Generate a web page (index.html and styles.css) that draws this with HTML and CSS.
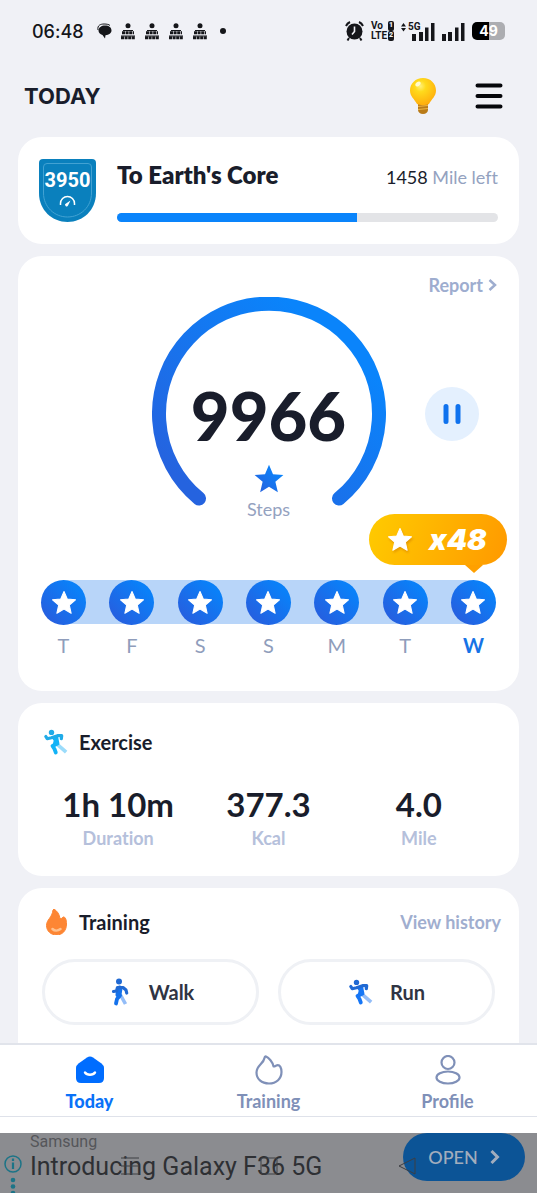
FILE: index.html
```html
<!DOCTYPE html>
<html lang="en">
<head>
    <meta charset="UTF-8">
    <meta name="viewport" content="width=device-width, initial-scale=1.0">
    <title>Today</title>
    <link rel="stylesheet" href="styles.css">
</head>
<body>
    <svg class="sprite" aria-hidden="true">
        <defs>
            <linearGradient id="blue" x1="0" y1="1" x2="1" y2="0">
                <stop offset="0.1" stop-color="#2563df"/>
                <stop offset="0.8" stop-color="#0a84fb"/>
            </linearGradient>
        </defs>
        <symbol id="star" viewBox="0 0 24 24">
            <path d="M12 1.400l3 6.900 7.600.7-5.700 5 1.700 7.500-6.600-3.900-6.600 3.900 1.700-7.500-5.700-5 7.600-.7z" stroke-width="1" stroke-linejoin="round" stroke="currentColor" fill="currentColor"/>
        </symbol>
        <symbol id="runner" viewBox="0 0 26 26">
            <path d="M14.500 15.500l7.300 6.500" fill="none" stroke="var(--leg)" stroke-width="3.600" stroke-linecap="square"/>
            <circle cx="8.500" cy="3.400" r="2.700" fill="var(--dark)"/>
            <path d="M9.500 8.500h5l1 5.500-3 2.500-2-1 1-4z" fill="currentColor" stroke="currentColor" stroke-width="1.500" stroke-linejoin="round"/>
            <path d="M14.500 14.500L9.500 17l2 3 1.300 3.500" fill="none" stroke="currentColor" stroke-width="3.800" stroke-linecap="round" stroke-linejoin="round"/>
            <path d="M2.800 7.500l1.400 2.200 4.300-1 6-2h4.200l-.4 3" fill="none" stroke="var(--dark)" stroke-width="3.200" stroke-linecap="round" stroke-linejoin="round"/>
        </symbol>
        <symbol id="paper" viewBox="0 0 16 17">
            <circle cx="8" cy="2.800" r="2.500"/>
            <path d="M3 7.500h10M1 13h14" fill="none" stroke="currentColor" stroke-width="1.200"/>
            <path d="M2 9.800h12M1 14.800h14" fill="none" stroke="currentColor" stroke-width="3" stroke-dasharray="3 0.600"/>
        </symbol>
    </svg>

    <div class="status">
        <span class="clock">06:48</span>
        <div class="notices">
            <svg width="15" height="16" viewBox="0 0 15 16"><path d="M1 7C0 2 4 1 7 1c3 0 5 .5 6 1.500" fill="none" stroke="currentColor"/><path d="M8 2.500c4 0 6.500 2 6.500 5 0 2.500-2.500 4.500-6 4.700L8 15.500l-2.500-3.500C3 11.500 1.500 9.500 1.500 7.500c0-3 3-5 6.500-5z"/></svg>
            <svg width="16" height="17"><use href="#paper"/></svg>
            <svg width="16" height="17"><use href="#paper"/></svg>
            <svg width="16" height="17"><use href="#paper"/></svg>
            <svg width="16" height="17"><use href="#paper"/></svg>
            <span class="dot"></span>
        </div>
        <div class="system">
            <svg width="19" height="20" viewBox="0 0 19 20"><circle cx="9.500" cy="10.500" r="8"/><path d="M1 5a8 8 0 0 1 4-4M18 5a8 8 0 0 0-4-4M4 17l-1.500 2.500M15 17l1.500 2.500" fill="none" stroke="currentColor" stroke-width="2"/><path d="M9.500 5.500v5l-2.500 3" fill="none" stroke="#f0f1f6" stroke-width="1.600"/></svg>
            <div class="volte">
                <span>Vo <b>1</b></span>
                <span>LTE<b>2</b></span>
            </div>
            <div class="signal">
                <svg width="34" height="19" viewBox="0 0 34 19"><path d="M0 4.500L2.500 1 5 4.500zM0 6h5L2.500 9.500zM11 12h4v7h-4zM18 10h4v9h-4zM24 5.500h3.500V19H24zM30 1h3.500v18H30z"/></svg>
                <span class="net">5G</span>
            </div>
            <svg width="23" height="19" viewBox="0 0 23 19"><path d="M0 12h4v7H0zM6 10h4v9H6zM13 5.500h3.500V19H13zM19 1h3.500v18H19z"/></svg>
            <span class="battery">49</span>
        </div>
    </div>

    <header class="header">
        <h1>TODAY</h1>
        <button class="icon-button" aria-label="Tips">
            <svg width="28" height="38" viewBox="0 0 28 38">
                <defs>
                    <radialGradient id="glass" cx="0.4" cy="0.3" r="0.7">
                        <stop offset="0" stop-color="#fff07a"/>
                        <stop offset="0.3" stop-color="#ffda1c"/>
                        <stop offset="1" stop-color="#ffae0c"/>
                    </radialGradient>
                </defs>
                <path d="M9 26h10v7c0 2-2 4-5 4s-5-2-5-4z" fill="#b97b18"/>
                <path d="M9 29.500l10-1M9 32.500l10-1" stroke="#f0b640" stroke-width="1.200"/>
                <path d="M14 1C6.500 1 1 6.500 1 13.500c0 6 4.500 8.500 7 13.500 3 1.500 9 1.500 12 0 2.500-5 7-7.500 7-13.500C27 6.500 21.500 1 14 1z" fill="url(#glass)"/>
                <ellipse cx="9" cy="7" rx="3" ry="2" fill="#fffbd0" transform="rotate(-35 9 7)"/>
            </svg>
        </button>
        <button class="icon-button" aria-label="Menu">
            <svg width="28" height="26" viewBox="0 0 28 26"><path d="M2.500 2.500h23M2.500 13h23M2.500 23.500h23" stroke="#06070b" stroke-width="4" stroke-linecap="round"/></svg>
        </button>
    </header>

    <main class="cards">
        <section class="card goal">
            <div class="shield">
                <svg width="57" height="63" viewBox="0 0 57 63">
                    <path d="M4 0h49q4 0 4 4v30c0 17-13 29-28.500 29S0 51 0 34V4q0-4 4-4z" fill="#0a80bd"/>
                    <path d="M8 4.500h41q3.500 0 3.500 3.500v26c0 14-11 24-24 24s-24-10-24-24V8q0-3.500 3.500-3.500z" fill="none" stroke="#42a2d3"/>
                    <path d="M21.500 46v-1.500a7 7 0 0 1 14 0V46" fill="none" stroke="#fff" stroke-width="1.500"/>
                    <path d="M31.500 41.500l-4.500 3a1.500 1.500 0 1 0 2 2z" fill="#fff"/>
                </svg>
                <span>3950</span>
            </div>
            <div class="goal-info">
                <div class="goal-head">
                    <h2 id="goal">To Earth's Core</h2>
                    <span class="left"><b>1458</b> Mile left</span>
                </div>
                <progress value="63" max="100" aria-labelledby="goal"></progress>
            </div>
        </section>

        <section class="card steps">
            <a class="report" href="#report">Report
                <svg width="9" height="12" viewBox="0 0 9 12"><path d="M1.500 1L7 6l-5.500 5" fill="none" stroke="currentColor" stroke-width="2.500"/></svg>
            </a>
            <div class="stage">
                <div class="ring">
                    <svg class="arc" viewBox="0 0 234 234"><path d="M47 201.500A110 110 0 1 1 187 201.500" fill="none" stroke="url(#blue)" stroke-width="14" stroke-linecap="round"/></svg>
                    <strong>9966</strong>
                    <svg width="32" height="30" viewBox="0 0 24 24"><path d="M12 .5l3.200 7.700 8.300.6-6.400 5.400 2 8.300-7.100-4.300-7.100 4.300 2-8.300L.5 8.800l8.300-.6z" fill="url(#blue)"/></svg>
                    <span>Steps</span>
                </div>
                <button class="pause" aria-label="Pause">
                    <svg width="18" height="20" viewBox="0 0 18 20"><path d="M3 2.500v15M15 2.500v15" stroke="#0f72ee" stroke-width="5" stroke-linecap="round"/></svg>
                </button>
            </div>
            <ul class="week">
                <li><i><svg><use href="#star"/></svg></i>T</li>
                <li><i><svg><use href="#star"/></svg></i>F</li>
                <li><i><svg><use href="#star"/></svg></i>S</li>
                <li><i><svg><use href="#star"/></svg></i>S</li>
                <li><i><svg><use href="#star"/></svg></i>M</li>
                <li><i><svg><use href="#star"/></svg></i>T</li>
                <li class="now">
                    <i><svg><use href="#star"/></svg></i>W
                    <div class="bonus"><svg><use href="#star"/></svg>x48</div>
                </li>
            </ul>
        </section>

        <section class="card exercise">
            <h3><svg class="cyan" width="26" height="26"><use href="#runner"/></svg>Exercise</h3>
            <dl class="stats">
                <div><dd>1h 10m</dd><dt>Duration</dt></div>
                <div><dd>377.3</dd><dt>Kcal</dt></div>
                <div><dd>4.0</dd><dt>Mile</dt></div>
            </dl>
        </section>

        <section class="card training">
            <div class="training-head">
                <h3>
                    <svg width="26" height="26" viewBox="0 0 26 26"><path d="M11 0c3 2 5.500 5 6 9.500 1.500.5 2-.5 3-1.500 2.500-.5 3.500 3 3.500 7 0 7-4.500 11-10 11S3.500 22 3.500 16.500C3.500 10.500 9 9 10 1z" fill="#fd8634" stroke="#fd8634" stroke-linejoin="round"/><path d="M9.500 20c2 2 5.500 2 8 0" fill="none" stroke="#ffc18e" stroke-width="2.500" stroke-linecap="round"/></svg>
                    Training
                </h3>
                <a href="#history">View history</a>
            </div>
            <div class="actions">
                <button>
                    <svg width="26" height="28" viewBox="0 0 26 28">
                        <path d="M13.500 17l5 9" fill="none" stroke="#93bdf8" stroke-width="3.600"/>
                        <circle cx="12" cy="3.500" r="3" fill="#2069d3"/>
                        <path d="M12.500 10.500l-1 6" fill="none" stroke="#1472ec" stroke-width="6" stroke-linecap="round"/>
                        <path d="M6.500 13.500l3-.5 1-3.500h5.500l3 2.500.7 3" fill="none" stroke="#2069d3" stroke-width="3.200" stroke-linecap="round" stroke-linejoin="round"/>
                        <path d="M13 17.500L10 21l-1 4.500" fill="none" stroke="#1472ec" stroke-width="3.800" stroke-linecap="round" stroke-linejoin="round"/>
                    </svg>
                    Walk
                </button>
                <button>
                    <svg width="26" height="26"><use href="#runner"/></svg>
                    Run
                </button>
            </div>
        </section>
    </main>

    <nav class="tabs">
        <a class="active" href="#today">
            <svg width="30" height="30" viewBox="0 0 30 30"><path d="M12 2.500q3-2 6 0l8.500 6Q29 10.500 29 13v10q0 5-5 5H6q-5 0-5-5V13q0-2.500 2.500-4.500z" fill="#006dff"/><path d="M10 17.500c2 3 8 3 10 0" fill="none" stroke="#fff" stroke-width="2.400" stroke-linecap="round"/></svg>
            Today
        </a>
        <a href="#training">
            <svg width="30" height="30" viewBox="0 0 30 30"><path d="M12 1.500c2.500 1 7 5.500 7.500 10 1.500 0 2-.8 3.500-1.200 3-.6 4.500 2.700 4.500 6.700 0 6.500-5 11.500-12.500 11.500S2.500 24 2.500 17.500C2.500 10.500 9.500 9 10.500 3c.2-1 .7-1.700 1.500-1.500z" fill="none" stroke="currentColor" stroke-width="2.200" stroke-linejoin="round"/></svg>
            Training
        </a>
        <a href="#profile">
            <svg width="30" height="30" viewBox="0 0 30 30"><circle cx="15" cy="7.500" r="6.500" fill="none" stroke="currentColor" stroke-width="2.200"/><ellipse cx="15" cy="22.500" rx="11.500" ry="6" fill="none" stroke="currentColor" stroke-width="2.200"/></svg>
            Profile
        </a>
    </nav>

    <aside class="ad">
        <div class="ad-body">
            <div class="ad-marks">
                <svg width="18" height="40" viewBox="0 0 18 40"><circle cx="9" cy="9" r="8" fill="none" stroke="#1c7487" stroke-width="1.500"/><path d="M9 7.500V14M9 3.500V6" stroke="#1c7487" stroke-width="2.200"/><g fill="#1c7487"><circle cx="9" cy="25" r="2.300"/><circle cx="9" cy="31.500" r="2.300"/><circle cx="9" cy="38" r="2.300"/></g></svg>
            </div>
            <div class="ad-text">
                <span>Samsung</span>
                <strong>Introducing Galaxy F36 5G</strong>
            </div>
            <button class="open">OPEN <svg width="10" height="14" viewBox="0 0 10 14"><path d="M1.500 1l6 6-6 6" fill="none" stroke="currentColor" stroke-width="3"/></svg></button>
            <!-- system navigation keys lie over the banner -->
            <div class="keys">
                <svg width="18" height="18" viewBox="0 0 18 18"><path d="M0 1h18M0 9h18M0 17h18"/></svg>
                <svg width="18" height="18" viewBox="0 0 18 18"><rect x="1" y="1" width="16" height="16" rx="2"/></svg>
                <svg width="18" height="18" viewBox="0 0 18 18"><path d="M17 1v16L1 9z"/></svg>
            </div>
        </div>
    </aside>
</body>
</html>
```
FILE: styles.css
```css
* {
    box-sizing: border-box;
}
body {
    margin: 0;
    height: 100vh;
    display: flex;
    flex-direction: column;
    overflow: hidden;
    background-color: #f0f1f6;
    color: #191d2b;
    font-family: Lato, sans-serif;
    font-variant-ligatures: none;
}
h1, h2, h3, ul, dl, dd {
    margin: 0;
    padding: 0;
}
svg {
    display: block;
    flex-shrink: 0;
}
a {
    text-decoration: none;
}
button {
    border: none;
    padding: 0;
    font-family: inherit;
    cursor: pointer;
}
.sprite {
    position: absolute;
    width: 0;
    height: 0;
}

/* status bar */
.status {
    flex-shrink: 0;
    display: flex;
    align-items: center;
    height: 62px;
    padding: 0 32px;
    color: #15161a;
    fill: currentColor;
    font-family: Inter, sans-serif;
}
.clock {
    font-size: 18px;
    font-weight: 500;
}
.notices {
    display: flex;
    align-items: center;
    gap: 8px;
    margin-left: 13px;
}
.dot {
    width: 6px;
    height: 6px;
    margin-left: 4px;
    border-radius: 50%;
    background-color: #15161a;
}
.system {
    display: flex;
    align-items: center;
    gap: 7px;
    margin-left: auto;
}
.volte {
    display: flex;
    flex-direction: column;
    width: 23px;
    font-family: Roboto, sans-serif;
    font-size: 10px;
    line-height: 10px;
    font-weight: 700;
}
.volte span {
    display: flex;
    justify-content: space-between;
}
.volte b {
    padding: 0 1px;
    border-radius: 2px;
    background-color: #15161a;
    color: #f0f1f6;
    font-size: 7px;
    line-height: 9px;
}
.signal {
    position: relative;
}
.net {
    position: absolute;
    top: 0;
    left: 7px;
    font-family: Roboto, sans-serif;
    font-size: 10px;
    line-height: 9px;
    font-weight: 700;
}
.battery {
    width: 33px;
    height: 18px;
    border-radius: 5px;
    background: linear-gradient(90deg, #000 50%, #acadb1 50%);
    color: #fff;
    font-size: 14px;
    line-height: 18px;
    font-weight: 700;
    text-align: center;
}

.header {
    flex-shrink: 0;
    display: flex;
    align-items: center;
    gap: 38px;
    height: 67px;
    padding: 0 34px 0 24px;
}
.header h1 {
    flex: 1;
    font-family: Inter, sans-serif;
    font-size: 22px;
    font-weight: 700;
}
.icon-button {
    background: none;
}

/* cards */
.cards {
    flex: 1;
    min-height: 0;
    overflow: hidden;
    display: flex;
    flex-direction: column;
    gap: 12px;
    padding: 8px 18px 0;
}
.card {
    flex-shrink: 0;
    border-radius: 24px;
    background-color: #fff;
}
.goal {
    display: flex;
    align-items: center;
    gap: 21px;
    padding: 22px 21px;
}
.shield {
    position: relative;
}
.shield span {
    position: absolute;
    top: 8px;
    left: 0;
    right: 0;
    color: #fff;
    font-family: Roboto, sans-serif;
    font-size: 20px;
    line-height: 26px;
    font-weight: 700;
    text-align: center;
}
.goal-info {
    flex: 1;
}
.goal-head {
    display: flex;
    justify-content: space-between;
    align-items: flex-end;
    margin-bottom: 23px;
}
.goal-head h2 {
    font-size: 24px;
    line-height: 30px;
    font-weight: 800;
}
.left {
    color: #94a2c0;
    font-size: 18px;
    line-height: 26px;
}
.left b {
    color: #191d2b;
    font-weight: 400;
}
progress {
    display: block;
    width: 100%;
    height: 9px;
    border: none;
    border-radius: 5px;
    overflow: hidden;
    appearance: none;
}
progress::-webkit-progress-bar {
    background-color: #e3e4e7;
}
progress::-webkit-progress-value {
    background-color: #0a84fb;
}

.steps {
    padding: 17px 0 34px;
}
.report {
    display: flex;
    justify-content: flex-end;
    align-items: center;
    gap: 5px;
    padding-right: 22px;
    color: #9eadcf;
    font-size: 18px;
    line-height: 24px;
    font-weight: 700;
}
.stage {
    display: grid;
    grid-template-columns: 1fr 234px 1fr;
    align-items: center;
    justify-items: center;
}
.ring {
    grid-column: 2;
    position: relative;
    display: flex;
    flex-direction: column;
    align-items: center;
    width: 234px;
    height: 234px;
    padding-top: 78px;
    color: #94a2bf;
    font-size: 18px;
    line-height: 24px;
}
.arc {
    position: absolute;
    top: 0;
    left: 0;
    width: 100%;
}
.ring strong {
    margin-bottom: 9px;
    color: #191d2b;
    font-size: 67px;
    line-height: 80px;
    font-weight: 900;
}
.ring span {
    margin-top: 3px;
}
.pause {
    display: flex;
    align-items: center;
    justify-content: center;
    width: 54px;
    height: 54px;
    border-radius: 50%;
    background-color: #e4f0fe;
}
.week {
    display: flex;
    justify-content: space-between;
    margin: 49px 23px 0;
    background: linear-gradient(#b8d5f9, #b8d5f9) center top / calc(100% - 44px) 44px no-repeat;
    list-style: none;
    color: #8f9dbb;
    font-size: 20px;
    line-height: 24px;
    text-align: center;
}
.week li {
    position: relative;
    width: 45px;
}
.week i {
    display: flex;
    align-items: center;
    justify-content: center;
    height: 45px;
    margin-bottom: 8px;
    border-radius: 50%;
    background: linear-gradient(45deg, #2560e0 15%, #0a80f8 80%);
    color: #fff;
}
.week svg {
    width: 26px;
    height: 26px;
}
.week .now {
    color: #1673e6;
    font-weight: 700;
}
.bonus {
    position: absolute;
    right: -11px;
    bottom: calc(100% + 15px);
    display: flex;
    align-items: center;
    gap: 16px;
    width: 138px;
    height: 51px;
    padding-left: 18px;
    border-radius: 26px;
    background: linear-gradient(110deg, #ffcb00, #ff9900);
    color: #fff;
    font-family: Inter, sans-serif;
    font-size: 29px;
    font-style: italic;
    font-weight: 900;
}
.bonus svg {
    filter: drop-shadow(1px 2px 1px rgba(190, 100, 0, 0.4));
}
.bonus::after {
    content: "";
    position: absolute;
    right: 24px;
    top: 100%;
    border: 9px solid transparent;
    border-top: 8px solid #ffa000;
    border-bottom: none;
}

h3 {
    display: flex;
    align-items: center;
    gap: 10px;
    font-size: 20px;
    line-height: 26px;
    font-weight: 700;
}
.exercise {
    padding: 26px 25px;
}
.exercise svg, .actions svg {
    --dark: #2069d3;
    --leg: #93bdf8;
    color: #1676f5;
}
.exercise .cyan {
    --dark: #20abe8;
    --leg: #9bdcfb;
    color: #12b3f7;
}
.stats {
    display: grid;
    grid-template-columns: repeat(3, 1fr);
    margin-top: 29px;
    text-align: center;
}
.stats div {
    display: flex;
    flex-direction: column;
    gap: 2px;
}
.stats dd {
    font-size: 33px;
    line-height: 40px;
    font-weight: 700;
}
.stats dt {
    color: #b5c0db;
    font-size: 18px;
    line-height: 24px;
    font-weight: 700;
}

.training {
    padding-top: 21px;
}
.training-head {
    display: flex;
    justify-content: space-between;
    align-items: center;
    padding: 0 18px 0 25px;
}
.training-head a {
    color: #a0aecf;
    font-size: 18px;
    font-weight: 700;
}
.actions {
    display: grid;
    grid-template-columns: 1fr 1fr;
    gap: 19px;
    padding: 24px 24px 48px;
}
.actions button {
    display: flex;
    align-items: center;
    justify-content: center;
    gap: 16px;
    height: 66px;
    border: 3px solid #eff1f5;
    border-radius: 33px;
    background-color: #fff;
    color: #303443;
    font-size: 20px;
    font-weight: 700;
}

/* bottom tabs */
.tabs {
    flex-shrink: 0;
    display: grid;
    grid-template-columns: repeat(3, 1fr);
    height: 73px;
    padding-top: 10px;
    border-top: 2px solid #e1e4eb;
    background-color: #fff;
    font-variant-ligatures: normal;
}
.tabs a {
    display: flex;
    flex-direction: column;
    align-items: center;
    gap: 4px;
    color: #7f90b8;
    font-size: 18px;
    line-height: 24px;
    font-weight: 700;
}
.tabs .active {
    color: #0a72f8;
    font-weight: 900;
}

.ad {
    flex-shrink: 0;
    padding: 16px 0 6px;
    border-top: 1px solid #dfe2ea;
    background-color: #fff;
}
.ad-body {
    position: relative;
    display: flex;
    align-items: flex-start;
    gap: 8px;
    height: 60px;
    padding: 0 12px 0 4px;
    overflow: hidden;
    background-color: #8b8c90;
}
.ad-marks {
    padding-top: 22px;
}
.ad-text {
    flex: 1;
    display: flex;
    flex-direction: column;
    color: #55565a;
    font-family: Roboto, sans-serif;
    font-size: 16px;
    line-height: 18px;
    white-space: nowrap;
}
.ad-text strong {
    color: #2e3034;
    font-size: 25px;
    line-height: 32px;
    font-weight: 400;
}
.open {
    display: flex;
    align-items: center;
    justify-content: center;
    gap: 12px;
    width: 122px;
    height: 48px;
    border-radius: 24px;
    background-color: #0c5496;
    color: #a2adbd;
    font-size: 18px;
    font-weight: 500;
}
.keys {
    position: absolute;
    left: 0;
    right: 0;
    top: 24px;
    display: flex;
    justify-content: space-evenly;
    fill: none;
    stroke: #3c3e43;
    pointer-events: none;
}
```
